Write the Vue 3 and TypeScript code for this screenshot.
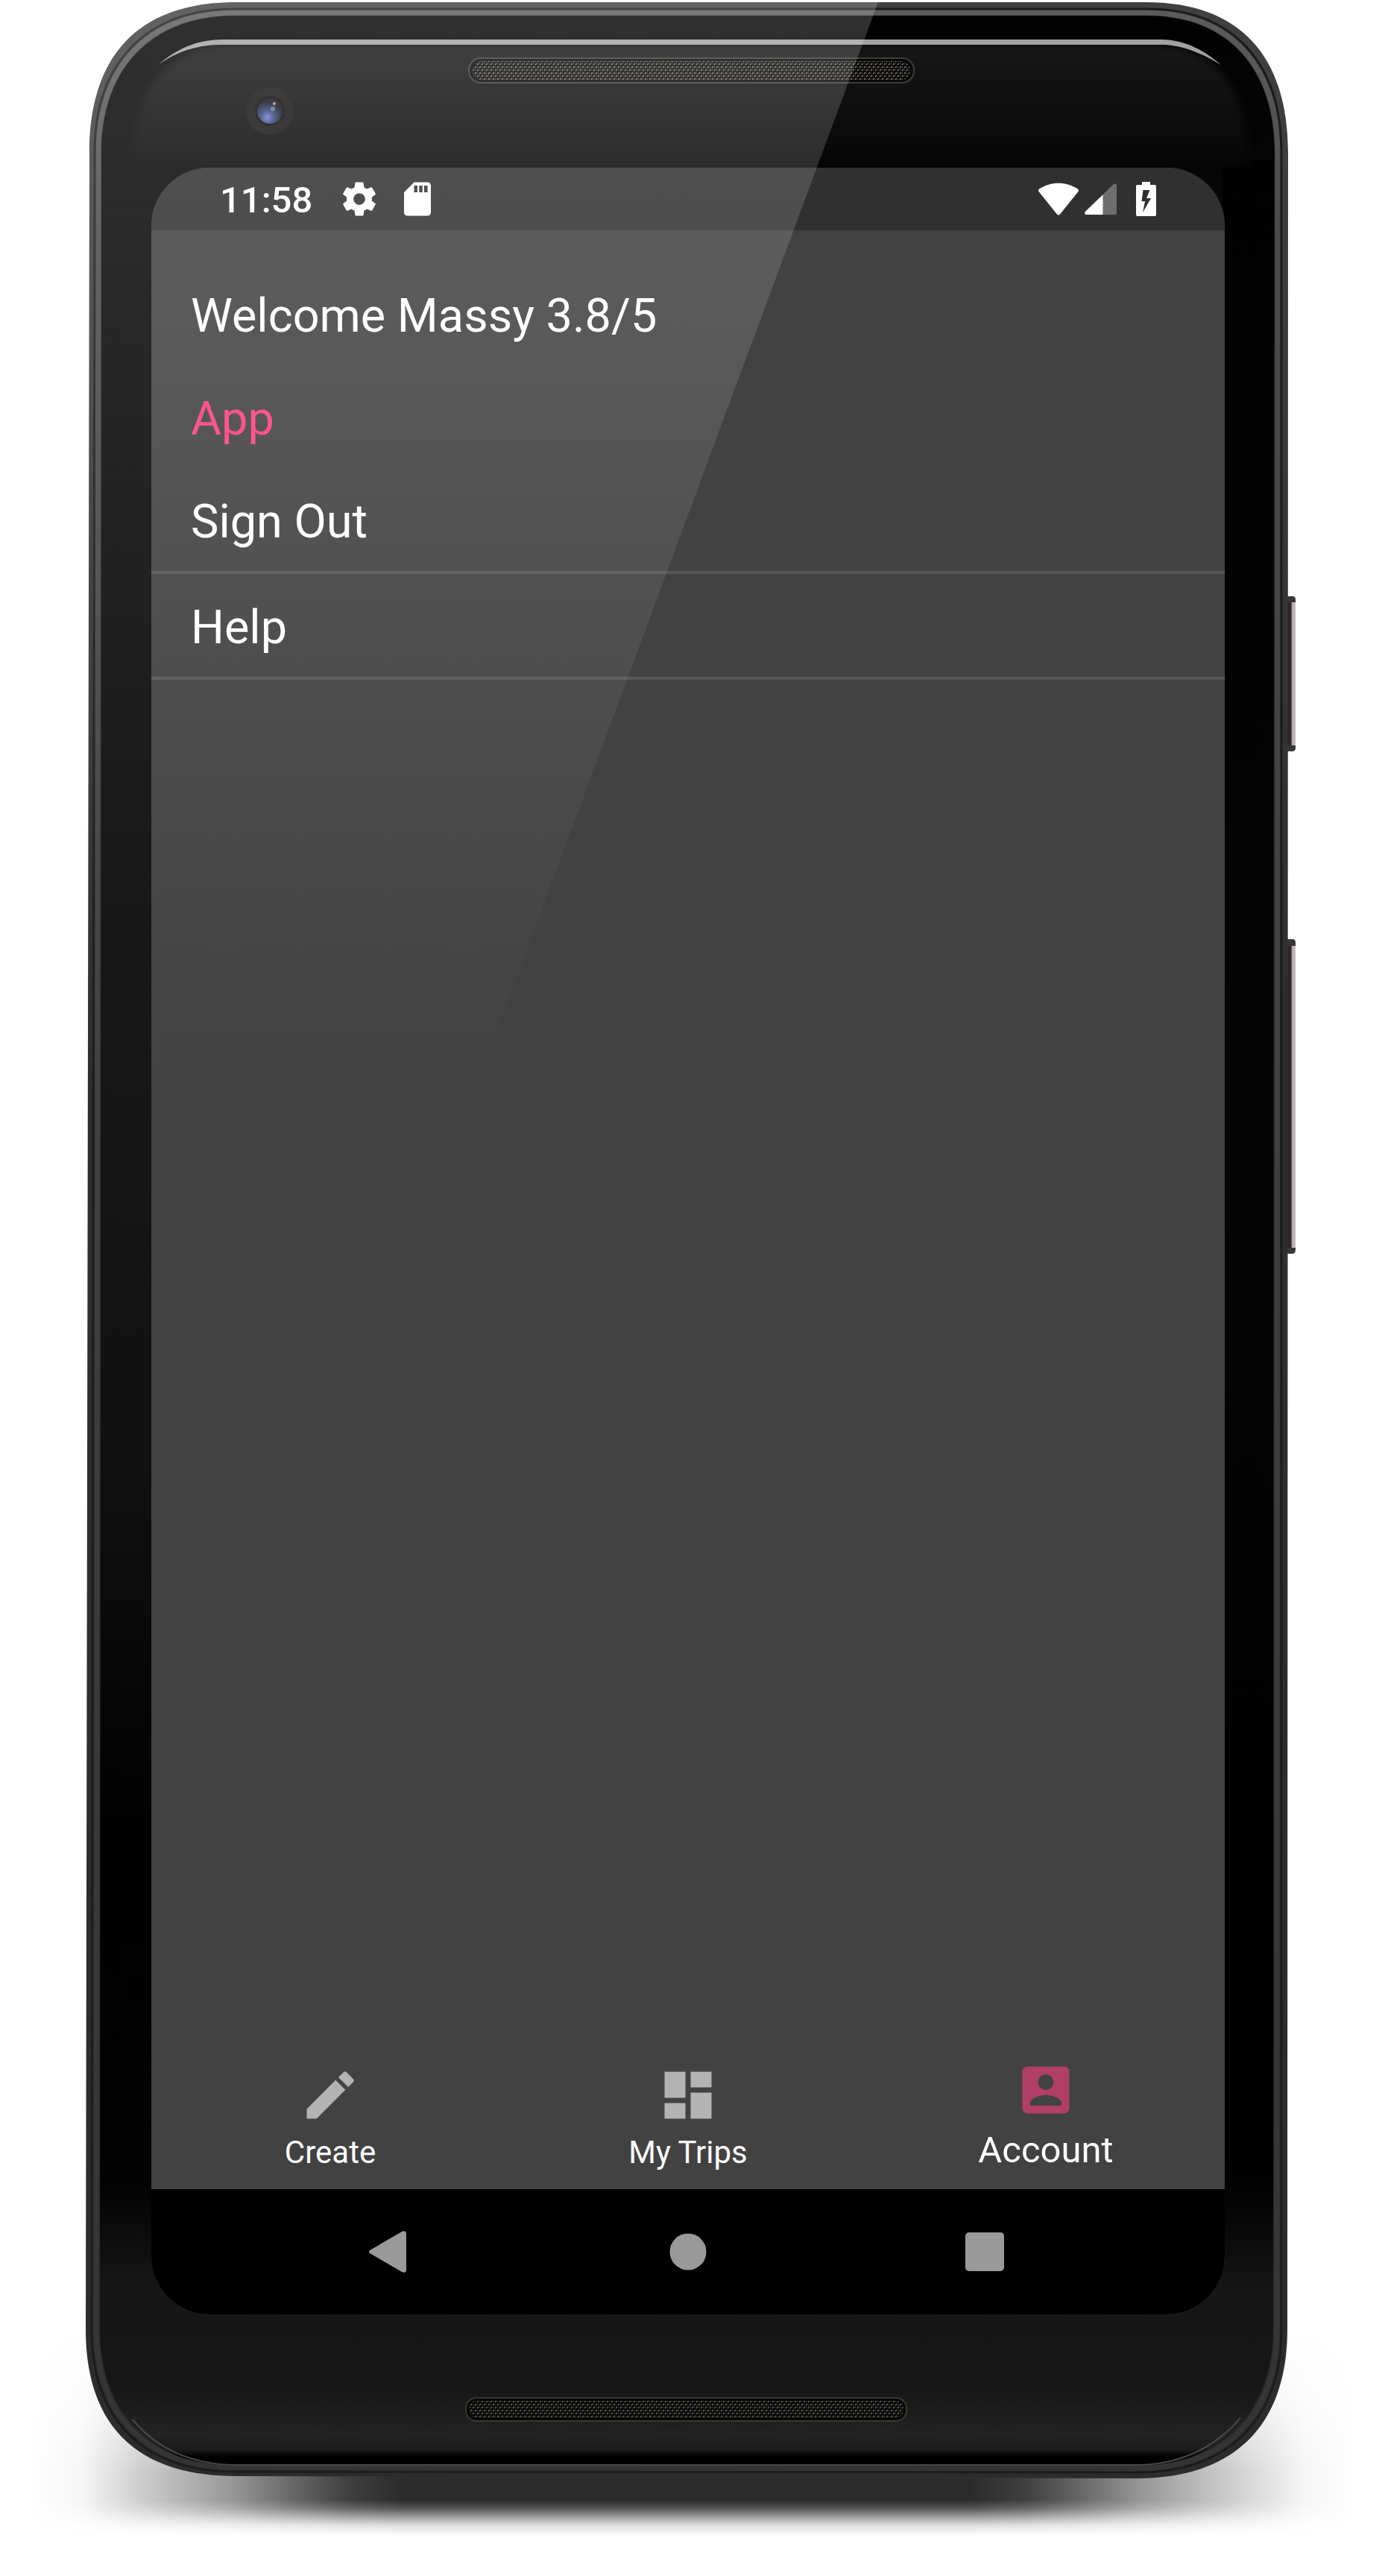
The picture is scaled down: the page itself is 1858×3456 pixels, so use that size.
<script setup lang="ts">
import { ref } from 'vue'

interface Tab {
  id: string
  label: string
  icon: string
}

const tabs: Tab[] = [
  {
    id: 'create',
    label: 'Create',
    icon: 'M3 17.25V21h3.75L17.81 9.94l-3.75-3.75L3 17.25zM20.71 7.04a1 1 0 0 0 0-1.41l-2.34-2.34a1 1 0 0 0-1.41 0l-1.83 1.83 3.75 3.75 1.83-1.83z',
  },
  {
    id: 'trips',
    label: 'My Trips',
    icon: 'M3 13h8V3H3v10zm0 8h8v-6H3v6zm10 0h8V11h-8v10zm0-18v6h8V3h-8z',
  },
  {
    id: 'account',
    label: 'Account',
    icon: 'M3 5v14a2 2 0 0 0 2 2h14a2 2 0 0 0 2-2V5a2 2 0 0 0-2-2H5a2 2 0 0 0-2 2zm12 4a3 3 0 1 1-6 0 3 3 0 0 1 6 0zm-9 8c0-2 4-3.1 6-3.1s6 1.1 6 3.1v1H6v-1z',
  },
]

const active = ref('account')
const time = '11:58'
const userName = 'Massy'
const rating = '3.8/5'
</script>

<template>
  <div class="device">
    <svg class="shell" viewBox="0 0 1858 3456" aria-hidden="true">
      <defs>
        <linearGradient id="shadowX" gradientUnits="userSpaceOnUse" x1="40" x2="1820" y1="0" y2="0">
          <stop offset="0" stop-color="#000" stop-opacity="0" />
          <stop offset=".04" stop-color="#000" stop-opacity=".04" />
          <stop offset=".085" stop-color="#000" stop-opacity=".2" />
          <stop offset=".15" stop-color="#000" stop-opacity=".4" />
          <stop offset=".2" stop-color="#000" stop-opacity=".6" />
          <stop offset=".24" stop-color="#000" stop-opacity=".75" />
          <stop offset=".28" stop-color="#000" stop-opacity=".83" />
          <stop offset=".71" stop-color="#000" stop-opacity=".83" />
          <stop offset=".75" stop-color="#000" stop-opacity=".75" />
          <stop offset=".79" stop-color="#000" stop-opacity=".6" />
          <stop offset=".84" stop-color="#000" stop-opacity=".4" />
          <stop offset=".91" stop-color="#000" stop-opacity=".18" />
          <stop offset=".96" stop-color="#000" stop-opacity=".04" />
          <stop offset="1" stop-color="#000" stop-opacity="0" />
        </linearGradient>
        <linearGradient id="shadowY" gradientUnits="userSpaceOnUse" x1="0" x2="0" y1="3120" y2="3402">
          <stop offset="0" stop-color="#000" />
          <stop offset=".35" stop-color="#555" />
          <stop offset=".7" stop-color="#fff" />
          <stop offset=".83" stop-color="#fff" />
          <stop offset=".87" stop-color="#ccc" />
          <stop offset=".91" stop-color="#777" />
          <stop offset=".95" stop-color="#282828" />
          <stop offset="1" stop-color="#000" />
        </linearGradient>
        <mask id="shadowMask" maskUnits="userSpaceOnUse" x="0" y="3100" width="1858" height="356">
          <rect x="0" y="3100" width="1858" height="356" fill="url(#shadowY)" />
        </mask>
        <linearGradient id="rim" x1="0" x2="0" y1="0" y2="1">
          <stop offset="0" stop-color="#404040" />
          <stop offset=".4" stop-color="#2e2e2e" />
          <stop offset="1" stop-color="#2c2c2c" />
        </linearGradient>
        <linearGradient id="rimLight" gradientUnits="userSpaceOnUse" x1="0" x2="0" y1="0" y2="3325">
          <stop offset="0" stop-color="#5c5c5c" />
          <stop offset=".1" stop-color="#4a4a4a" />
          <stop offset=".5" stop-color="#3e3e3e" />
          <stop offset="1" stop-color="#343434" />
        </linearGradient>
        <linearGradient id="face" gradientUnits="userSpaceOnUse" x1="0" x2="0" y1="0" y2="3306">
          <stop offset="0" stop-color="#020202" />
          <stop offset=".07" stop-color="#060606" />
          <stop offset=".3" stop-color="#101010" />
          <stop offset=".45" stop-color="#161616" />
          <stop offset=".6" stop-color="#101010" />
          <stop offset=".74" stop-color="#010101" />
          <stop offset=".885" stop-color="#020202" />
          <stop offset=".925" stop-color="#151515" />
          <stop offset=".97" stop-color="#171717" />
          <stop offset=".988" stop-color="#232323" />
          <stop offset=".994" stop-color="#1c1c1c" />
          <stop offset=".997" stop-color="#000" />
          <stop offset="1" stop-color="#000" />
        </linearGradient>
        <linearGradient id="rightDim" x1="0" x2="0" y1="0" y2="1">
          <stop offset="0" stop-color="#000" stop-opacity=".8" />
          <stop offset=".85" stop-color="#000" stop-opacity=".8" />
          <stop offset="1" stop-color="#000" stop-opacity="0" />
        </linearGradient>
        <linearGradient id="panel" x1="0" x2="0" y1="0" y2="1">
          <stop offset="0" stop-color="#171717" />
          <stop offset="1" stop-color="#060606" />
        </linearGradient>
        <linearGradient id="button" gradientUnits="userSpaceOnUse" x1="1728" x2="1738" y1="0" y2="0">
          <stop offset="0" stop-color="#2a2628" />
          <stop offset=".4" stop-color="#2e2a2c" />
          <stop offset=".55" stop-color="#b5adad" />
          <stop offset="1" stop-color="#c4bcbc" />
        </linearGradient>
        <radialGradient id="lens" cx=".4" cy=".75" r=".6">
          <stop offset="0" stop-color="#7286d0" />
          <stop offset=".4" stop-color="#3c4a84" />
          <stop offset="1" stop-color="#17181f" />
        </radialGradient>
        <pattern id="mesh" width="6" height="8" patternUnits="userSpaceOnUse">
          <path d="M1 3l2-2M4 7l2-2" stroke="#8a8375" stroke-width="1.5" />
          <path d="M4 2l1 1M1 5l1 1" stroke="#544f46" stroke-width="1.3" />
        </pattern>
        <filter id="soft" x="-5%" y="-20%" width="110%" height="140%" color-interpolation-filters="sRGB">
          <feGaussianBlur stdDeviation="5" />
        </filter>
      </defs>

      <rect x="40" y="3100" width="1780" height="302" fill="url(#shadowX)" mask="url(#shadowMask)" />

      <g fill="url(#button)">
        <rect x="1724" y="800" width="14" height="208" rx="4" />
        <rect x="1724" y="1260" width="14" height="422" rx="4" />
      </g>
      <path
        d="M1727 800h7q4 0 4 5v3h-11zM1727 1000h11v4q-1 4-4 4h-7zM1727 1260h7q4 0 4 5v4h-11zM1727 1674h11v3q-1 5-4 5h-7z"
        fill="#3a3537"
      />

      <path
        d="M316 3H1538C1663 3 1728 75 1728 205L1727 3125C1727 3255 1655 3325 1525 3325L316 3322C185 3322 115 3255 115 3125L120 205C120 75 185 3 316 3z"
        fill="url(#rim)"
      />
      <path
        d="M316 17H1538C1653 17 1714 92 1714 205L1713 3125C1713 3240 1643 3312 1525 3312L316 3311C196 3311 129 3240 129 3125L132 205C132 92 197 17 316 17z"
        fill="none"
        stroke="url(#rimLight)"
        stroke-width="7"
      />
      <path
        d="M316 12H1538C1656 12 1719 86 1719 205L1719 3125C1719 3246 1648 3317 1525 3317L316 3316C192 3316 123 3246 123 3125L127 205C127 86 194 12 316 12z"
        fill="none"
        stroke="#1c1c1c"
        stroke-width="3"
      />
      <path
        d="M316 21H1538C1650 21 1710 95 1710 205L1708 3125C1708 3235 1640 3308 1525 3308H316C200 3308 134 3235 134 3125L136 205C136 95 200 21 316 21z"
        fill="url(#face)"
      />
      <rect x="1640" y="215" width="68" height="2880" fill="url(#rightDim)" />
      <path
        d="M300 60H1557C1640 64 1676 130 1676 224H178C178 130 215 64 300 60z"
        fill="url(#panel)"
        filter="url(#soft)"
      />
      <path d="M178 3246C212 3288 262 3307 316 3307H1525C1582 3307 1630 3284 1664 3244" fill="none" stroke="#484848" stroke-width="2" />
      <path
        d="M212 87C240 64 265 53 300 53H1557C1592 53 1618 70 1638 87C1605 67 1580 60 1557 60H300C265 60 240 68 212 87z"
        fill="#a2a2a2"
      />

      <g>
        <circle cx="362" cy="149" r="32" fill="#171414" />
        <circle cx="362" cy="149" r="20" fill="#0b0b0d" />
        <circle cx="362" cy="149" r="17" fill="url(#lens)" />
        <circle cx="366" cy="146" r="3" fill="#5d7f86" />
        <circle cx="368" cy="139" r="2" fill="#c08fb0" />
      </g>

      <g stroke-width="2">
        <rect x="629" y="78" width="597" height="33" rx="16" fill="#070706" stroke="#3c3c3c" />
        <rect x="634" y="82" width="587" height="25" rx="12" fill="url(#mesh)" stroke="none" />
        <rect x="625" y="3217" width="591" height="31" rx="14" fill="#070706" stroke="#3a3835" />
        <rect x="629" y="3221" width="583" height="23" rx="10" fill="url(#mesh)" stroke="none" opacity=".8" />
      </g>
    </svg>

    <div class="screen">
      <header class="status">
        <time class="clock">{{ time }}</time>
        <svg class="glyph" viewBox="0 0 24 24" aria-hidden="true">
          <path
            fill-rule="evenodd"
            d="M19.43 12.98c.04-.32.07-.64.07-.98s-.03-.66-.07-.98l2.11-1.65a.5.5 0 0 0 .12-.64l-2-3.46a.5.5 0 0 0-.61-.22l-2.49 1a7.3 7.3 0 0 0-1.69-.98l-.38-2.65A.49.49 0 0 0 14 2h-4a.49.49 0 0 0-.49.42l-.38 2.65c-.61.25-1.17.59-1.69.98l-2.49-1a.49.49 0 0 0-.61.22l-2 3.46a.49.49 0 0 0 .12.64l2.11 1.65c-.04.32-.07.65-.07.98s.03.66.07.98l-2.11 1.65a.5.5 0 0 0-.12.64l2 3.46c.12.22.39.3.61.22l2.49-1c.52.4 1.08.73 1.69.98l.38 2.65c.03.24.24.42.49.42h4c.25 0 .46-.18.49-.42l.38-2.65a7.3 7.3 0 0 0 1.69-.98l2.49 1c.23.09.49 0 .61-.22l2-3.46a.5.5 0 0 0-.12-.64l-2.11-1.65zM12 15.5a3.5 3.5 0 1 1 0-7 3.5 3.5 0 0 1 0 7z"
          />
        </svg>
        <svg class="glyph" viewBox="0 0 24 24" aria-hidden="true">
          <path
            fill-rule="evenodd"
            d="M18 2h-8L4.02 8 4 20a2 2 0 0 0 2 2h12a2 2 0 0 0 2-2V4a2 2 0 0 0-2-2zm-6 6h-2V4h2v4zm3 0h-2V4h2v4zm3 0h-2V4h2v4z"
          />
        </svg>
        <span class="spacer"></span>
        <svg class="wifi" viewBox="0 0 54 44" aria-hidden="true">
          <path d="M1 8.500C17-2 37-2 53 8.500Q54.500 10 53.500 12L29 42.500Q27 44.500 25 42.500L.5 12Q-.5 10 1 8.500z" />
        </svg>
        <svg class="signal" viewBox="0 0 43 42" aria-hidden="true">
          <path d="M2 42Q-1 41 .8 38L39 1Q42-1 43 2V40Q43 42 41 42z" opacity=".3" />
          <path d="M2 42Q-1 41 .8 38L24.500 15.200V42z" />
        </svg>
        <svg class="battery" viewBox="0 0 27 46" aria-hidden="true">
          <path
            fill-rule="evenodd"
            d="M8 0H19V4H25Q27 4 27 6V44Q27 46 25 46H2Q0 46 0 44V6Q0 4 2 4H8zM9.500 11L7.500 26H12L9 41L20 22H14L18.500 11z"
          />
        </svg>
      </header>

      <main class="menu">
        <h1 class="row">Welcome {{ userName }} {{ rating }}</h1>
        <h2 class="row section">App</h2>
        <a class="row link" href="#sign-out">Sign Out</a>
        <a class="row link" href="#help">Help</a>
      </main>

      <nav class="tabs" aria-label="Main">
        <a
          v-for="tab in tabs"
          :key="tab.id"
          class="tab"
          :class="{ active: tab.id === active }"
          :href="'#' + tab.id"
          :aria-current="tab.id === active ? 'page' : undefined"
          @click="active = tab.id"
        >
          <svg class="tab-icon" viewBox="0 0 24 24" aria-hidden="true">
            <path :d="tab.icon" fill-rule="evenodd" />
          </svg>
          <span>{{ tab.label }}</span>
        </a>
      </nav>

      <div class="system">
        <button type="button" aria-label="Back">
          <svg viewBox="0 0 64 64" aria-hidden="true">
            <path d="M5 30L49 4.500Q54 3 54 8V56Q54 61 49 59.500L5 34Q3 32 5 30z" />
          </svg>
        </button>
        <button type="button" aria-label="Home">
          <svg viewBox="0 0 64 64" aria-hidden="true"><circle cx="32" cy="32" r="24.500" /></svg>
        </button>
        <button type="button" aria-label="Recent apps">
          <svg viewBox="0 0 64 64" aria-hidden="true"><rect x="4" y="6" width="52" height="52" rx="5" /></svg>
        </button>
      </div>
    </div>

    <svg class="glare" viewBox="0 0 1858 3456" aria-hidden="true">
      <defs>
        <linearGradient id="shine" gradientUnits="userSpaceOnUse" x1="0" x2="0" y1="0" y2="1500">
          <stop offset="0" stop-color="#fff" stop-opacity=".182" />
          <stop offset=".85" stop-color="#fff" stop-opacity=".015" />
          <stop offset="1" stop-color="#fff" stop-opacity="0" />
        </linearGradient>
      </defs>
      <path d="M316 3H1178L623 1500H118L120 205C120 75 185 3 316 3z" fill="url(#shine)" />
    </svg>
  </div>
</template>

<style>
body {
  margin: 0;
  background: #ffffff;
}
</style>

<style scoped>
.device {
  position: relative;
  display: grid;
  grid-template-columns: 203fr 1440fr 215fr;
  grid-template-rows: 225fr 2880fr 351fr;
  width: 100%;
  aspect-ratio: 1858 / 3456;
  overflow: hidden;
  font-family: Roboto, 'Liberation Sans', sans-serif;
  color: #ffffff;
}

.shell,
.glare {
  grid-area: 1 / 1 / -1 / -1;
  width: 100%;
  height: 100%;
}

.glare {
  z-index: 1;
  pointer-events: none;
}

.screen {
  grid-area: 2 / 2;
  display: flex;
  flex-direction: column;
  min-width: 0;
  border-radius: 78px;
  overflow: hidden;
  background: #424242;
}

.status {
  display: flex;
  align-items: center;
  height: 84px;
  box-sizing: border-box;
  padding: 0 92px;
  background: #303030;
  fill: #ffffff;
}

.clock {
  margin-right: 12px;
  padding-top: 4px;
  font-size: 49px;
  line-height: 56px;
  font-weight: 500;
}

.glyph {
  width: 54px;
  height: 54px;
  margin-left: 24px;
}

.spacer {
  flex: 1;
}

.wifi {
  width: 54px;
  height: 44px;
}

.signal {
  width: 43px;
  height: 42px;
  margin-left: 8px;
}

.battery {
  width: 27px;
  height: 46px;
  margin-left: 26px;
}

.menu {
  flex: 1;
  display: flex;
  flex-direction: column;
  padding-top: 43px;
}

.row {
  margin: 0;
  padding: 35px 53px 29px;
  font-size: 63px;
  line-height: 74px;
  font-weight: 400;
  color: #ffffff;
  text-decoration: none;
}

.section {
  color: #ff4081;
}

.link {
  border-bottom: 4px solid #585858;
}

.tabs {
  display: grid;
  grid-template-columns: repeat(3, 1fr);
  height: 196px;
}

.tab {
  display: flex;
  flex-direction: column;
  align-items: center;
  justify-content: flex-end;
  gap: 11px;
  padding-bottom: 25px;
  font-size: 42px;
  line-height: 48px;
  color: #ffffff;
  text-decoration: none;
}

.tab-icon {
  width: 84px;
  height: 84px;
  fill: #b3b3b3;
}

.tab.active {
  padding-bottom: 24px;
  font-size: 49px;
  line-height: 56px;
}

.tab.active .tab-icon {
  fill: #b03e66;
}

.system {
  display: grid;
  grid-template-columns: repeat(3, 400px);
  justify-content: center;
  height: 168px;
  background: #000000;
}

.system button {
  display: flex;
  align-items: center;
  justify-content: center;
  padding: 0;
  border: 0;
  background: none;
}

.system svg {
  width: 64px;
  height: 64px;
  fill: #999999;
}
</style>
